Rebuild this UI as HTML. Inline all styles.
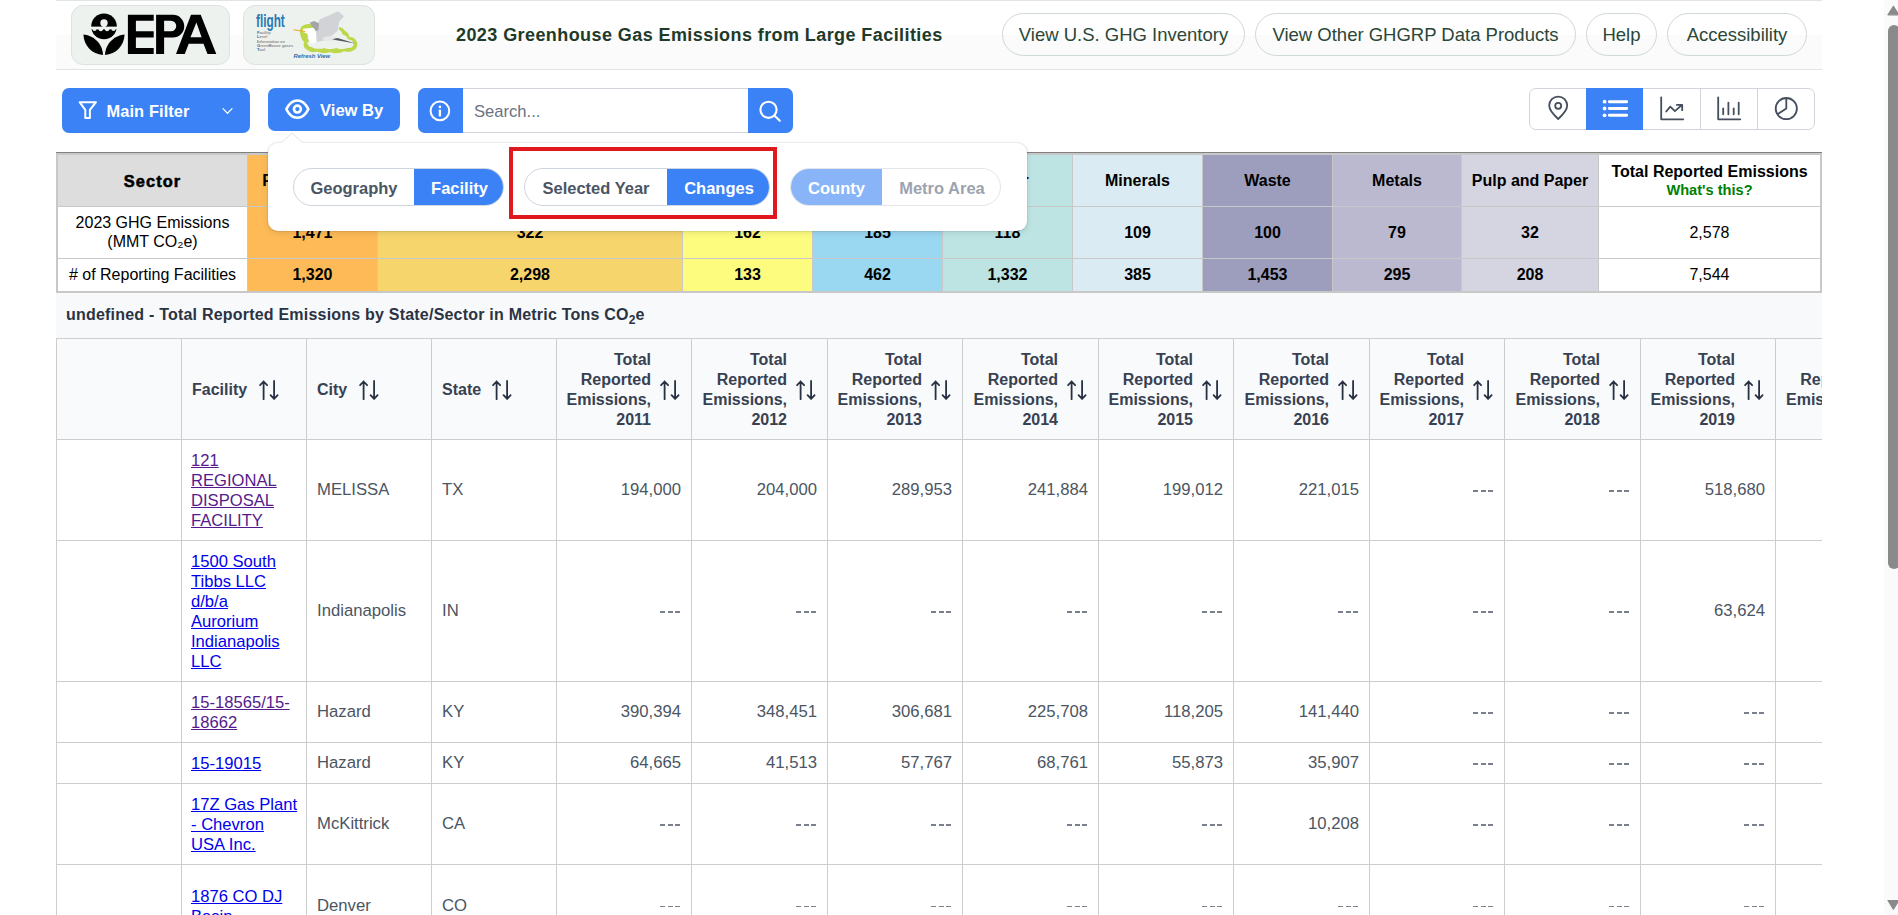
<!DOCTYPE html><html><head><meta charset="utf-8"><title>FLIGHT</title><style>
*{box-sizing:border-box;margin:0;padding:0}
html,body{width:1898px;height:915px;overflow:hidden;background:#fff;font-family:"Liberation Sans",sans-serif}
.a{position:absolute}
#hdr{position:absolute;left:56px;top:0;width:1766px;height:70px;border-top:1px solid #dfe5e2;border-bottom:1px solid #dfe5e2;background:linear-gradient(#fff 0,#fff 50%,#fbfbfb 50%,#fbfbfb 100%)}
.logo{position:absolute;top:5px;height:60px;background:#edf2ef;border:1px solid #dbe4df;border-radius:12px;overflow:hidden}
.pill{position:absolute;top:13px;height:43px;border:1px solid #cfd9d3;border-radius:22px;color:#2b4737;font-size:18.5px;line-height:41px;text-align:center;white-space:nowrap}
#title{position:absolute;left:456px;top:25px;font-size:18px;line-height:20px;font-weight:bold;color:#1e3a29;white-space:nowrap;letter-spacing:0.42px}
.btn{position:absolute;background:#3b82f6;color:#fff;border-radius:7px;font-weight:bold;font-size:17px;white-space:nowrap}
.btn span{position:absolute;line-height:20px}
svg{position:absolute;overflow:visible}
/* sector table */
#sec{position:absolute;left:56px;top:152px;width:1766px;height:141px;border:2px solid #c8c8c8;border-top:1px solid #808080;background:#c8c8c8}
.sc{position:absolute;display:flex;flex-direction:column;align-items:center;justify-content:center;text-align:center;color:#000;font-size:16px;line-height:19px}
.b{font-weight:bold}
/* popover */
#pop{position:absolute;left:268px;top:143px;width:759px;height:88px;background:#fff;border-radius:10px;box-shadow:0 0 0 1px rgba(0,0,0,0.06),0 2px 6px rgba(0,0,0,0.10)}
.tg{position:absolute;top:168px;height:38px;border:1px solid #cfd5dd;border-radius:19px;overflow:hidden;font-size:16.5px;white-space:nowrap}
.tg div{position:absolute;top:0;height:36px;line-height:39px;text-align:center;font-weight:bold}
/* data */
#ttl{position:absolute;left:56px;top:293px;width:1766px;height:46px;background:#f8f9fb}
#ttl span{position:absolute;left:10px;top:12px;letter-spacing:0.21px;font-size:16px;font-weight:bold;color:#2a3342;white-space:nowrap;line-height:20px}
#dt{position:absolute;left:56px;top:338px;width:1766px;height:577px;overflow:hidden}
.vl{position:absolute;top:0;width:1px;height:577px;background:#cdcdcd}
.hl{position:absolute;left:0;width:1766px;height:1px;background:#cdcdcd}
.th{position:absolute;font-weight:bold;color:#374151;font-size:16px;line-height:20px;white-space:nowrap}
.td{position:absolute;color:#4b5563;font-size:16.7px;line-height:20px;white-space:nowrap}
.lk{position:absolute;font-size:16.6px;line-height:20px;white-space:nowrap;text-decoration:underline;color:#0000ee}
.vis{color:#551a8b}
</style></head><body>
<div id="hdr"></div>
<div class="logo" style="left:71px;width:159px"></div>
<div class="logo" style="left:243px;width:132px"></div>
<div id="title">2023 Greenhouse Gas Emissions from Large Facilities</div>
<div class="pill" style="left:1002px;width:243px">View U.S. GHG Inventory</div>
<div class="pill" style="left:1255px;width:321px">View Other GHGRP Data Products</div>
<div class="pill" style="left:1586px;width:71px">Help</div>
<div class="pill" style="left:1667px;width:140px">Accessibility</div>
<div class="btn" style="left:62px;top:88px;width:188px;height:44.5px"><span style="left:44.5px;top:13px;font-size:16.4px;letter-spacing:0.1px">Main Filter</span></div>
<div class="btn" style="left:268px;top:88px;width:132px;height:43px"><span style="left:52px;top:12.5px;font-size:16.6px">View By</span></div>
<div class="a" style="left:418px;top:88px;width:375px;height:44.5px;border-radius:7px;background:#fff;border:1px solid #ced4da"></div>
<div class="a" style="left:418px;top:88px;width:45px;height:44.5px;border-radius:7px 0 0 7px;background:#3b82f6"></div>
<div class="a" style="left:748px;top:88px;width:45px;height:44.5px;border-radius:0 7px 7px 0;background:#3b82f6"></div>
<div class="a" style="left:474px;top:101.5px;font-size:16.6px;line-height:20px;color:#6b7280">Search...</div>
<div class="a" style="left:1529px;top:88px;width:286px;height:41.5px;border:1px solid #d1d5db;border-radius:7px;background:#fff;overflow:hidden"></div>
<div class="a" style="left:1586px;top:88px;width:57px;height:41.5px;background:#3b82f6"></div>
<div class="a" style="left:1700px;top:89px;width:1px;height:40px;background:#d1d5db"></div>
<div class="a" style="left:1757px;top:89px;width:1px;height:40px;background:#d1d5db"></div>
<svg style="left:74px;top:96px" width="30" height="28" viewBox="74 96 30 28"><path d="M79.6 102.2 H96 L89.9 109.8 V118 H85.3 V109.8 Z" fill="none" stroke="#fff" stroke-width="2" stroke-linejoin="round"/></svg>
<svg style="left:218px;top:102px" width="20" height="16" viewBox="218 102 20 16"><path d="M223 108.6 L227.5 113.4 L232 108.6" fill="none" stroke="#fff" stroke-width="1.3" stroke-linecap="round" stroke-linejoin="round"/></svg>
<svg style="left:280px;top:95px" width="35" height="28" viewBox="280 95 35 28"><path d="M286.3 109.1 C289.2 103.3 293 100.4 297.35 100.4 C301.7 100.4 305.5 103.3 308.4 109.1 C305.5 114.9 301.7 117.8 297.35 117.8 C293 117.8 289.2 114.9 286.3 109.1 Z" fill="none" stroke="#fff" stroke-width="2.5" stroke-linejoin="round"/><circle cx="297.4" cy="109.1" r="3.45" fill="none" stroke="#fff" stroke-width="2.6"/></svg>
<svg style="left:426px;top:97px" width="28" height="28" viewBox="426 97 28 28"><circle cx="439.9" cy="110.9" r="9.3" fill="none" stroke="#fff" stroke-width="2"/><rect x="438.75" y="105.7" width="2.3" height="2.3" fill="#fff"/><rect x="438.75" y="109.6" width="2.3" height="6.8" rx="0.6" fill="#fff"/></svg>
<svg style="left:755px;top:97px" width="32" height="30" viewBox="755 97 32 30"><circle cx="768.5" cy="109.8" r="8.1" fill="none" stroke="#fff" stroke-width="2.1"/><path d="M774.3 115.6 L779.8 120.8" stroke="#fff" stroke-width="2.1" stroke-linecap="round"/></svg>
<svg style="left:1540px;top:90px" width="260" height="38" viewBox="1540 90 260 38"><path d="M1558.2 119 C1551 112.5 1549.2 108.5 1549.2 105.6 A9 9 0 0 1 1567.2 105.6 C1567.2 108.5 1565.4 112.5 1558.2 119 Z" fill="none" stroke="#454e5c" stroke-width="1.8" stroke-linejoin="round"/><circle cx="1558.2" cy="105.8" r="3" fill="none" stroke="#454e5c" stroke-width="1.8"/><g fill="#fff"><circle cx="1604.6" cy="101.7" r="1.9"/><circle cx="1604.6" cy="108.5" r="1.9"/><circle cx="1604.6" cy="115.3" r="1.9"/></g><path d="M1609.3 101.7 H1626.7 M1609.3 108.5 H1626.7 M1609.3 115.3 H1626.7" stroke="#fff" stroke-width="2.9" stroke-linecap="round"/><path d="M1661.2 97.3 V119.3 H1683.3 M1666.2 111.5 L1670.3 106.7 L1674.9 111.2 L1682 104.9 M1676.9 104.9 H1682.2 V110.2" fill="none" stroke="#454e5c" stroke-width="1.8" stroke-linecap="round" stroke-linejoin="round"/><path d="M1718.2 97.3 V119.3 H1740.3 M1723.2 108.4 V114.3 M1728.4 102.6 V114.3 M1733.7 108.4 V114.3 M1738.7 102.6 V114.3" fill="none" stroke="#454e5c" stroke-width="1.8" stroke-linecap="round" stroke-linejoin="round"/><circle cx="1786.3" cy="108.6" r="10.6" fill="none" stroke="#454e5c" stroke-width="1.8"/><path d="M1786.3 98 V108.6 L1777.2 114.4" fill="none" stroke="#454e5c" stroke-width="1.8" stroke-linejoin="round"/></svg>
<svg style="left:71px;top:5px" width="159" height="60" viewBox="71 5 159 60"><g fill="#000"><path d="M127.9 14.8 H153.7 V20.8 H135.9 V31.3 H153.7 V37.5 H135.9 V48 H153.7 V53.9 H127.9 Z"/><path fill-rule="evenodd" d="M156.1 14.8 H172.9 A11.35 11.35 0 0 1 172.9 37.5 H164.1 V53.9 H156.1 Z M164.1 20.8 V31.3 H171 A5.25 5.25 0 0 0 171 20.8 Z"/><path fill-rule="evenodd" d="M176 53.9 L191 14.8 H200.7 L216.3 53.9 H207.5 L203.5 43.8 H188.7 L184.8 53.9 Z M196.4 22.5 L190.5 37.3 H201.6 Z"/><circle cx="104" cy="26.4" r="12.8"/><g fill="#edf2ef"><rect x="90" y="26.6" width="28" height="2.8"/><circle cx="94.5" cy="29.1" r="2"/><circle cx="100.8" cy="29.2" r="2.1"/><circle cx="107.1" cy="29.2" r="2.1"/><circle cx="113.5" cy="29.1" r="2"/><circle cx="104" cy="23" r="3.7"/><rect x="102.6" y="23" width="2.8" height="4.5"/></g><path d="M83.4 34.4 C92 35 102.5 42 103 54.9 C92 54 84 46 83.4 34.4 Z"/><path d="M124.6 34.4 C116 35 105.5 42 105 54.9 C116 54 124 46 124.6 34.4 Z"/></g></svg>
<svg style="left:243px;top:5px" width="132" height="60" viewBox="243 5 132 60"><g transform="translate(243 5)"><text x="13" y="21.9" font-family="Liberation Sans" font-weight="bold" font-size="18" fill="#2b78b4" transform="translate(13 0) scale(0.655 1) translate(-13 0)">flight</text><g font-family="Liberation Sans" font-size="4" fill="#8c8c8c" font-weight="bold"><text x="14" y="29.3"><tspan fill="#2b6ea8">F</tspan>acility</text><text x="14" y="33.4"><tspan fill="#2b6ea8">L</tspan>evel</text><text x="14" y="37.6"><tspan fill="#2b6ea8">I</tspan>nformation on</text><text x="14" y="41.8"><tspan fill="#2b6ea8">G</tspan>reen<tspan fill="#2b6ea8">H</tspan>ouse gases</text><text x="14" y="46"><tspan fill="#2b6ea8">T</tspan>ool</text></g><path d="M57 28 C56 21 62 18.5 66.5 19 C69 19.3 71 20.5 71.5 22 L66 27 C64 30 64.5 35 66.5 37 L62 38 C58.5 35 57.5 31.5 57 28 Z" fill="#bcd84a"/><path d="M61 37 C60 41 61.5 44 64 44.5 C66 47 71 48 74 46.5 C78 48.5 84 48.5 87 47 C91 49 98 48.5 101 46 C104 47.5 109 47 112 44.5 C115 42 115 37.5 113 35.5 C112 33.5 109 31.5 106.5 32 C106 29 104.5 27 102 26 C101 24 99 22.5 96.5 22 L95.8 24.5 C98 25.5 99 27.5 99.5 29.5 C102.5 30 104.5 32 105 34.5 C108 34.5 110.5 36 110.5 39 C110.5 42 108 43.5 104.5 43 C100.5 44.5 96 44.5 93 43 C90 44.5 84 44.5 81 43 C77.5 44.5 71 44 68.5 42 C66.5 42 64.5 40.5 64.5 38 Z" fill="#bcd84a"/><path d="M76.5 14.5 L95.1 6.3 L101.1 11.2 L96.2 16.7 L94.5 26 L83 35 L74.3 36.9 L72.5 30 Z" fill="#d2d3d6"/><path d="M66.7 17.8 L71 16.1 L76 18.3 L75.4 24.9 L72.7 26.5 L67.8 19.4 Z" fill="#a3a4a8"/><path d="M60.1 23.8 L70.5 22.7 C72.5 25 73.2 27 73.2 29.2 L73.2 35.8 C72.5 37.5 71.5 38.5 70 38.5 L66.7 38 C66 36 66.3 34.5 66.1 33.6 C65.5 31 65 30 64 28.7 C62.5 27.8 61 27.5 60.1 27 Z" fill="#ffffff"/><ellipse cx="87" cy="33.6" rx="7.5" ry="2.3" fill="#e6e7e8"/><path d="M50.3 24.2 L62.3 26.1 L62.1 27 L50.5 25.2 Z" fill="#f0a030"/><path d="M89.1 34.2 L94.5 33 L112.6 38.5 L95 35.6 Z" fill="#55595e"/><text x="50.4" y="53.4" font-family="Liberation Sans" font-size="5.9" font-style="italic" font-weight="bold" fill="#2b6ea8">Refresh View</text></g></svg>
<div class="a" style="left:56px;top:152px;width:1766px;height:141px;background:#c8c8c8"></div>
<div class="a" style="left:56px;top:152px;width:1766px;height:1px;background:#808080"></div>
<div class="sc b" style="left:58px;top:155px;width:189px;height:51px;background:#dddddd;"><span style="font-size:16.4px;letter-spacing:1.1px;-webkit-text-stroke:0.55px #000;position:relative;top:0.5px">Sector</span></div>
<div class="sc" style="left:58px;top:207px;width:189px;height:51px;background:#ffffff;padding-bottom:2px;">2023 GHG Emissions<br>(MMT CO₂e)</div>
<div class="sc" style="left:58px;top:259px;width:189px;height:32px;background:#ffffff;padding-bottom:2px;"># of Reporting Facilities</div>
<div class="sc b" style="left:248px;top:155px;width:129px;height:51px;background:#fdba57;">Power Plants</div>
<div class="sc b" style="left:248px;top:207px;width:129px;height:51px;background:#fdba57;">1,471</div>
<div class="sc b" style="left:248px;top:259px;width:129px;height:32px;background:#fdba57;padding-bottom:2px;">1,320</div>
<div class="sc b" style="left:378px;top:155px;width:304px;height:51px;background:#f6d56d;">Petroleum and Natural Gas Systems</div>
<div class="sc b" style="left:378px;top:207px;width:304px;height:51px;background:#f6d56d;">322</div>
<div class="sc b" style="left:378px;top:259px;width:304px;height:32px;background:#f6d56d;padding-bottom:2px;">2,298</div>
<div class="sc b" style="left:683px;top:155px;width:129px;height:51px;background:#fdfc7f;">Refineries</div>
<div class="sc b" style="left:683px;top:207px;width:129px;height:51px;background:#fdfc7f;">162</div>
<div class="sc b" style="left:683px;top:259px;width:129px;height:32px;background:#fdfc7f;padding-bottom:2px;">133</div>
<div class="sc b" style="left:813px;top:155px;width:129px;height:51px;background:#9ad7f1;">Chemicals</div>
<div class="sc b" style="left:813px;top:207px;width:129px;height:51px;background:#9ad7f1;">185</div>
<div class="sc b" style="left:813px;top:259px;width:129px;height:32px;background:#9ad7f1;padding-bottom:2px;">462</div>
<div class="sc b" style="left:943px;top:155px;width:129px;height:51px;background:#bde4e2;">Other</div>
<div class="sc b" style="left:943px;top:207px;width:129px;height:51px;background:#bde4e2;">118</div>
<div class="sc b" style="left:943px;top:259px;width:129px;height:32px;background:#bde4e2;padding-bottom:2px;">1,332</div>
<div class="sc b" style="left:1073px;top:155px;width:129px;height:51px;background:#dbebf3;">Minerals</div>
<div class="sc b" style="left:1073px;top:207px;width:129px;height:51px;background:#dbebf3;">109</div>
<div class="sc b" style="left:1073px;top:259px;width:129px;height:32px;background:#dbebf3;padding-bottom:2px;">385</div>
<div class="sc b" style="left:1203px;top:155px;width:129px;height:51px;background:#9d9ebd;">Waste</div>
<div class="sc b" style="left:1203px;top:207px;width:129px;height:51px;background:#9d9ebd;">100</div>
<div class="sc b" style="left:1203px;top:259px;width:129px;height:32px;background:#9d9ebd;padding-bottom:2px;">1,453</div>
<div class="sc b" style="left:1333px;top:155px;width:128px;height:51px;background:#bab9d0;">Metals</div>
<div class="sc b" style="left:1333px;top:207px;width:128px;height:51px;background:#bab9d0;">79</div>
<div class="sc b" style="left:1333px;top:259px;width:128px;height:32px;background:#bab9d0;padding-bottom:2px;">295</div>
<div class="sc b" style="left:1462px;top:155px;width:136px;height:51px;background:#d5d5e2;">Pulp and Paper</div>
<div class="sc b" style="left:1462px;top:207px;width:136px;height:51px;background:#d5d5e2;">32</div>
<div class="sc b" style="left:1462px;top:259px;width:136px;height:32px;background:#d5d5e2;padding-bottom:2px;">208</div>
<div class="sc b" style="left:1599px;top:155px;width:221px;height:51px;background:#ffffff;">Total Reported Emissions<br><span style="color:#008000;font-size:14.6px;line-height:18px">What's this?</span></div>
<div class="sc" style="left:1599px;top:207px;width:221px;height:51px;background:#ffffff;">2,578</div>
<div class="sc" style="left:1599px;top:259px;width:221px;height:32px;background:#ffffff;padding-bottom:2px;">7,544</div>
<div id="pop"></div>
<svg style="left:280px;top:132px" width="26" height="13"><path d="M0 12 L12 1 L24 12" fill="#fff" stroke="#e3e3e3" stroke-width="1"/><rect x="0" y="11" width="26" height="3" fill="#fff"/></svg>
<div class="tg" style="left:293px;width:211px"><div style="left:0;width:120px;color:#4b5563">Geography</div><div style="left:120px;width:91px;background:#3b82f6;color:#fff">Facility</div></div>
<div class="tg" style="left:524px;width:246px"><div style="left:0;width:142px;color:#4b5563">Selected Year</div><div style="left:142px;width:104px;background:#3b82f6;color:#fff">Changes</div></div>
<div class="tg" style="left:790px;width:211px;border-color:#e3e6ea"><div style="left:0;width:91px;background:#8ab4f8;color:#fff">County</div><div style="left:91px;width:120px;color:#9ca3af">Metro Area</div></div>
<div class="a" style="left:509px;top:147px;width:268px;height:72px;border:4px solid #e0191f"></div>
<div id="ttl"><span>undefined - Total Reported Emissions by State/Sector in Metric Tons CO<sub style="font-size:12px">2</sub>e</span></div>
<div id="dt">
<div class="a" style="left:0;top:0;width:1766px;height:101px;background:#f9fafb"></div>
<div class="vl" style="left:0px"></div>
<div class="vl" style="left:125px"></div>
<div class="vl" style="left:250px"></div>
<div class="vl" style="left:375px"></div>
<div class="vl" style="left:500px"></div>
<div class="vl" style="left:635px"></div>
<div class="vl" style="left:771px"></div>
<div class="vl" style="left:906px"></div>
<div class="vl" style="left:1042px"></div>
<div class="vl" style="left:1177px"></div>
<div class="vl" style="left:1313px"></div>
<div class="vl" style="left:1448px"></div>
<div class="vl" style="left:1584px"></div>
<div class="vl" style="left:1719px"></div>
<div class="hl" style="top:0px"></div>
<div class="hl" style="top:101px"></div>
<div class="hl" style="top:202px"></div>
<div class="hl" style="top:343px"></div>
<div class="hl" style="top:404px"></div>
<div class="hl" style="top:445px"></div>
<div class="hl" style="top:526px"></div>
<div class="th" style="left:136px;top:42px">Facility</div>
<svg style="left:203px;top:42px" width="20" height="21" viewBox="0 0 20 21"><path d="M4.6 19.2 V1.5 M1.1 5.2 L4.6 1.5 L8.1 5.2 M15.1 1 V18.9 M11.6 15.2 L15.1 18.9 L18.6 15.2" fill="none" stroke="#273142" stroke-width="1.8" stroke-linecap="round" stroke-linejoin="round"/></svg>
<div class="th" style="left:261px;top:42px">City</div>
<svg style="left:303px;top:42px" width="20" height="21" viewBox="0 0 20 21"><path d="M4.6 19.2 V1.5 M1.1 5.2 L4.6 1.5 L8.1 5.2 M15.1 1 V18.9 M11.6 15.2 L15.1 18.9 L18.6 15.2" fill="none" stroke="#273142" stroke-width="1.8" stroke-linecap="round" stroke-linejoin="round"/></svg>
<div class="th" style="left:386px;top:42px">State</div>
<svg style="left:436px;top:42px" width="20" height="21" viewBox="0 0 20 21"><path d="M4.6 19.2 V1.5 M1.1 5.2 L4.6 1.5 L8.1 5.2 M15.1 1 V18.9 M11.6 15.2 L15.1 18.9 L18.6 15.2" fill="none" stroke="#273142" stroke-width="1.8" stroke-linecap="round" stroke-linejoin="round"/></svg>
<div class="th" style="right:1171px;top:12px;text-align:right">Total<br>Reported<br>Emissions,<br>2011</div>
<svg style="left:604px;top:42px" width="20" height="21" viewBox="0 0 20 21"><path d="M4.6 19.2 V1.5 M1.1 5.2 L4.6 1.5 L8.1 5.2 M15.1 1 V18.9 M11.6 15.2 L15.1 18.9 L18.6 15.2" fill="none" stroke="#273142" stroke-width="1.8" stroke-linecap="round" stroke-linejoin="round"/></svg>
<div class="th" style="right:1035px;top:12px;text-align:right">Total<br>Reported<br>Emissions,<br>2012</div>
<svg style="left:740px;top:42px" width="20" height="21" viewBox="0 0 20 21"><path d="M4.6 19.2 V1.5 M1.1 5.2 L4.6 1.5 L8.1 5.2 M15.1 1 V18.9 M11.6 15.2 L15.1 18.9 L18.6 15.2" fill="none" stroke="#273142" stroke-width="1.8" stroke-linecap="round" stroke-linejoin="round"/></svg>
<div class="th" style="right:900px;top:12px;text-align:right">Total<br>Reported<br>Emissions,<br>2013</div>
<svg style="left:875px;top:42px" width="20" height="21" viewBox="0 0 20 21"><path d="M4.6 19.2 V1.5 M1.1 5.2 L4.6 1.5 L8.1 5.2 M15.1 1 V18.9 M11.6 15.2 L15.1 18.9 L18.6 15.2" fill="none" stroke="#273142" stroke-width="1.8" stroke-linecap="round" stroke-linejoin="round"/></svg>
<div class="th" style="right:764px;top:12px;text-align:right">Total<br>Reported<br>Emissions,<br>2014</div>
<svg style="left:1011px;top:42px" width="20" height="21" viewBox="0 0 20 21"><path d="M4.6 19.2 V1.5 M1.1 5.2 L4.6 1.5 L8.1 5.2 M15.1 1 V18.9 M11.6 15.2 L15.1 18.9 L18.6 15.2" fill="none" stroke="#273142" stroke-width="1.8" stroke-linecap="round" stroke-linejoin="round"/></svg>
<div class="th" style="right:629px;top:12px;text-align:right">Total<br>Reported<br>Emissions,<br>2015</div>
<svg style="left:1146px;top:42px" width="20" height="21" viewBox="0 0 20 21"><path d="M4.6 19.2 V1.5 M1.1 5.2 L4.6 1.5 L8.1 5.2 M15.1 1 V18.9 M11.6 15.2 L15.1 18.9 L18.6 15.2" fill="none" stroke="#273142" stroke-width="1.8" stroke-linecap="round" stroke-linejoin="round"/></svg>
<div class="th" style="right:493px;top:12px;text-align:right">Total<br>Reported<br>Emissions,<br>2016</div>
<svg style="left:1282px;top:42px" width="20" height="21" viewBox="0 0 20 21"><path d="M4.6 19.2 V1.5 M1.1 5.2 L4.6 1.5 L8.1 5.2 M15.1 1 V18.9 M11.6 15.2 L15.1 18.9 L18.6 15.2" fill="none" stroke="#273142" stroke-width="1.8" stroke-linecap="round" stroke-linejoin="round"/></svg>
<div class="th" style="right:358px;top:12px;text-align:right">Total<br>Reported<br>Emissions,<br>2017</div>
<svg style="left:1417px;top:42px" width="20" height="21" viewBox="0 0 20 21"><path d="M4.6 19.2 V1.5 M1.1 5.2 L4.6 1.5 L8.1 5.2 M15.1 1 V18.9 M11.6 15.2 L15.1 18.9 L18.6 15.2" fill="none" stroke="#273142" stroke-width="1.8" stroke-linecap="round" stroke-linejoin="round"/></svg>
<div class="th" style="right:222px;top:12px;text-align:right">Total<br>Reported<br>Emissions,<br>2018</div>
<svg style="left:1553px;top:42px" width="20" height="21" viewBox="0 0 20 21"><path d="M4.6 19.2 V1.5 M1.1 5.2 L4.6 1.5 L8.1 5.2 M15.1 1 V18.9 M11.6 15.2 L15.1 18.9 L18.6 15.2" fill="none" stroke="#273142" stroke-width="1.8" stroke-linecap="round" stroke-linejoin="round"/></svg>
<div class="th" style="right:87px;top:12px;text-align:right">Total<br>Reported<br>Emissions,<br>2019</div>
<svg style="left:1688px;top:42px" width="20" height="21" viewBox="0 0 20 21"><path d="M4.6 19.2 V1.5 M1.1 5.2 L4.6 1.5 L8.1 5.2 M15.1 1 V18.9 M11.6 15.2 L15.1 18.9 L18.6 15.2" fill="none" stroke="#273142" stroke-width="1.8" stroke-linecap="round" stroke-linejoin="round"/></svg>
<div class="th" style="right:-48.5px;top:12px;text-align:right">Total<br>Reported<br>Emissions,<br>2020</div>
<svg style="left:1823.5px;top:42px" width="20" height="21" viewBox="0 0 20 21"><path d="M4.6 19.2 V1.5 M1.1 5.2 L4.6 1.5 L8.1 5.2 M15.1 1 V18.9 M11.6 15.2 L15.1 18.9 L18.6 15.2" fill="none" stroke="#273142" stroke-width="1.8" stroke-linecap="round" stroke-linejoin="round"/></svg>
<div class="lk vis" style="left:135px;top:113.0px">121<br>REGIONAL<br>DISPOSAL<br>FACILITY</div>
<div class="td" style="left:261px;top:142.1px">MELISSA</div>
<div class="td" style="left:386px;top:142.1px">TX</div>
<div class="td" style="right:1141px;top:142.1px">194,000</div>
<div class="td" style="right:1005px;top:142.1px">204,000</div>
<div class="td" style="right:870px;top:142.1px">289,953</div>
<div class="td" style="right:734px;top:142.1px">241,884</div>
<div class="td" style="right:599px;top:142.1px">199,012</div>
<div class="td" style="right:463px;top:142.1px">221,015</div>
<div class="a" style="left:1416.8px;top:152.0px;width:20.2px;height:1.8px;background:repeating-linear-gradient(90deg,#7a818d 0,#7a818d 5px,transparent 5px,transparent 7.6px)"></div>
<div class="a" style="left:1552.8px;top:152.0px;width:20.2px;height:1.8px;background:repeating-linear-gradient(90deg,#7a818d 0,#7a818d 5px,transparent 5px,transparent 7.6px)"></div>
<div class="td" style="right:57px;top:142.1px">518,680</div>
<div class="lk" style="left:135px;top:214.0px">1500 South<br>Tibbs LLC<br>d/b/a<br>Aurorium<br>Indianapolis<br>LLC</div>
<div class="td" style="left:261px;top:263.1px">Indianapolis</div>
<div class="td" style="left:386px;top:263.1px">IN</div>
<div class="a" style="left:603.8px;top:273.0px;width:20.2px;height:1.8px;background:repeating-linear-gradient(90deg,#7a818d 0,#7a818d 5px,transparent 5px,transparent 7.6px)"></div>
<div class="a" style="left:739.8px;top:273.0px;width:20.2px;height:1.8px;background:repeating-linear-gradient(90deg,#7a818d 0,#7a818d 5px,transparent 5px,transparent 7.6px)"></div>
<div class="a" style="left:874.8px;top:273.0px;width:20.2px;height:1.8px;background:repeating-linear-gradient(90deg,#7a818d 0,#7a818d 5px,transparent 5px,transparent 7.6px)"></div>
<div class="a" style="left:1010.8px;top:273.0px;width:20.2px;height:1.8px;background:repeating-linear-gradient(90deg,#7a818d 0,#7a818d 5px,transparent 5px,transparent 7.6px)"></div>
<div class="a" style="left:1145.8px;top:273.0px;width:20.2px;height:1.8px;background:repeating-linear-gradient(90deg,#7a818d 0,#7a818d 5px,transparent 5px,transparent 7.6px)"></div>
<div class="a" style="left:1281.8px;top:273.0px;width:20.2px;height:1.8px;background:repeating-linear-gradient(90deg,#7a818d 0,#7a818d 5px,transparent 5px,transparent 7.6px)"></div>
<div class="a" style="left:1416.8px;top:273.0px;width:20.2px;height:1.8px;background:repeating-linear-gradient(90deg,#7a818d 0,#7a818d 5px,transparent 5px,transparent 7.6px)"></div>
<div class="a" style="left:1552.8px;top:273.0px;width:20.2px;height:1.8px;background:repeating-linear-gradient(90deg,#7a818d 0,#7a818d 5px,transparent 5px,transparent 7.6px)"></div>
<div class="td" style="right:57px;top:263.1px">63,624</div>
<div class="lk vis" style="left:135px;top:355.0px">15-18565/15-<br>18662</div>
<div class="td" style="left:261px;top:364.1px">Hazard</div>
<div class="td" style="left:386px;top:364.1px">KY</div>
<div class="td" style="right:1141px;top:364.1px">390,394</div>
<div class="td" style="right:1005px;top:364.1px">348,451</div>
<div class="td" style="right:870px;top:364.1px">306,681</div>
<div class="td" style="right:734px;top:364.1px">225,708</div>
<div class="td" style="right:599px;top:364.1px">118,205</div>
<div class="td" style="right:463px;top:364.1px">141,440</div>
<div class="a" style="left:1416.8px;top:374.0px;width:20.2px;height:1.8px;background:repeating-linear-gradient(90deg,#7a818d 0,#7a818d 5px,transparent 5px,transparent 7.6px)"></div>
<div class="a" style="left:1552.8px;top:374.0px;width:20.2px;height:1.8px;background:repeating-linear-gradient(90deg,#7a818d 0,#7a818d 5px,transparent 5px,transparent 7.6px)"></div>
<div class="a" style="left:1687.8px;top:374.0px;width:20.2px;height:1.8px;background:repeating-linear-gradient(90deg,#7a818d 0,#7a818d 5px,transparent 5px,transparent 7.6px)"></div>
<div class="lk" style="left:135px;top:416.0px">15-19015</div>
<div class="td" style="left:261px;top:415.1px">Hazard</div>
<div class="td" style="left:386px;top:415.1px">KY</div>
<div class="td" style="right:1141px;top:415.1px">64,665</div>
<div class="td" style="right:1005px;top:415.1px">41,513</div>
<div class="td" style="right:870px;top:415.1px">57,767</div>
<div class="td" style="right:734px;top:415.1px">68,761</div>
<div class="td" style="right:599px;top:415.1px">55,873</div>
<div class="td" style="right:463px;top:415.1px">35,907</div>
<div class="a" style="left:1416.8px;top:425.0px;width:20.2px;height:1.8px;background:repeating-linear-gradient(90deg,#7a818d 0,#7a818d 5px,transparent 5px,transparent 7.6px)"></div>
<div class="a" style="left:1552.8px;top:425.0px;width:20.2px;height:1.8px;background:repeating-linear-gradient(90deg,#7a818d 0,#7a818d 5px,transparent 5px,transparent 7.6px)"></div>
<div class="a" style="left:1687.8px;top:425.0px;width:20.2px;height:1.8px;background:repeating-linear-gradient(90deg,#7a818d 0,#7a818d 5px,transparent 5px,transparent 7.6px)"></div>
<div class="lk" style="left:135px;top:457.0px">17Z Gas Plant<br>- Chevron<br>USA Inc.</div>
<div class="td" style="left:261px;top:476.1px">McKittrick</div>
<div class="td" style="left:386px;top:476.1px">CA</div>
<div class="a" style="left:603.8px;top:486.0px;width:20.2px;height:1.8px;background:repeating-linear-gradient(90deg,#7a818d 0,#7a818d 5px,transparent 5px,transparent 7.6px)"></div>
<div class="a" style="left:739.8px;top:486.0px;width:20.2px;height:1.8px;background:repeating-linear-gradient(90deg,#7a818d 0,#7a818d 5px,transparent 5px,transparent 7.6px)"></div>
<div class="a" style="left:874.8px;top:486.0px;width:20.2px;height:1.8px;background:repeating-linear-gradient(90deg,#7a818d 0,#7a818d 5px,transparent 5px,transparent 7.6px)"></div>
<div class="a" style="left:1010.8px;top:486.0px;width:20.2px;height:1.8px;background:repeating-linear-gradient(90deg,#7a818d 0,#7a818d 5px,transparent 5px,transparent 7.6px)"></div>
<div class="a" style="left:1145.8px;top:486.0px;width:20.2px;height:1.8px;background:repeating-linear-gradient(90deg,#7a818d 0,#7a818d 5px,transparent 5px,transparent 7.6px)"></div>
<div class="td" style="right:463px;top:476.1px">10,208</div>
<div class="a" style="left:1416.8px;top:486.0px;width:20.2px;height:1.8px;background:repeating-linear-gradient(90deg,#7a818d 0,#7a818d 5px,transparent 5px,transparent 7.6px)"></div>
<div class="a" style="left:1552.8px;top:486.0px;width:20.2px;height:1.8px;background:repeating-linear-gradient(90deg,#7a818d 0,#7a818d 5px,transparent 5px,transparent 7.6px)"></div>
<div class="a" style="left:1687.8px;top:486.0px;width:20.2px;height:1.8px;background:repeating-linear-gradient(90deg,#7a818d 0,#7a818d 5px,transparent 5px,transparent 7.6px)"></div>
<div class="lk" style="left:135px;top:548.5px">1876 CO DJ<br>Basin</div>
<div class="td" style="left:261px;top:557.6px">Denver</div>
<div class="td" style="left:386px;top:557.6px">CO</div>
<div class="a" style="left:603.8px;top:567.5px;width:20.2px;height:1.8px;background:repeating-linear-gradient(90deg,#7a818d 0,#7a818d 5px,transparent 5px,transparent 7.6px)"></div>
<div class="a" style="left:739.8px;top:567.5px;width:20.2px;height:1.8px;background:repeating-linear-gradient(90deg,#7a818d 0,#7a818d 5px,transparent 5px,transparent 7.6px)"></div>
<div class="a" style="left:874.8px;top:567.5px;width:20.2px;height:1.8px;background:repeating-linear-gradient(90deg,#7a818d 0,#7a818d 5px,transparent 5px,transparent 7.6px)"></div>
<div class="a" style="left:1010.8px;top:567.5px;width:20.2px;height:1.8px;background:repeating-linear-gradient(90deg,#7a818d 0,#7a818d 5px,transparent 5px,transparent 7.6px)"></div>
<div class="a" style="left:1145.8px;top:567.5px;width:20.2px;height:1.8px;background:repeating-linear-gradient(90deg,#7a818d 0,#7a818d 5px,transparent 5px,transparent 7.6px)"></div>
<div class="a" style="left:1281.8px;top:567.5px;width:20.2px;height:1.8px;background:repeating-linear-gradient(90deg,#7a818d 0,#7a818d 5px,transparent 5px,transparent 7.6px)"></div>
<div class="a" style="left:1416.8px;top:567.5px;width:20.2px;height:1.8px;background:repeating-linear-gradient(90deg,#7a818d 0,#7a818d 5px,transparent 5px,transparent 7.6px)"></div>
<div class="a" style="left:1552.8px;top:567.5px;width:20.2px;height:1.8px;background:repeating-linear-gradient(90deg,#7a818d 0,#7a818d 5px,transparent 5px,transparent 7.6px)"></div>
<div class="a" style="left:1687.8px;top:567.5px;width:20.2px;height:1.8px;background:repeating-linear-gradient(90deg,#7a818d 0,#7a818d 5px,transparent 5px,transparent 7.6px)"></div>
</div>
<div class="a" style="left:1884px;top:0;width:14px;height:915px;background:#fafafa"></div>
<div class="a" style="left:1888px;top:25px;width:12px;height:544px;background:#8a8a8a;border-radius:6px"></div>
<svg style="left:1884px;top:0px" width="14" height="915" viewBox="1884 0 14 915"><path d="M1893.4 6.3 L1888 14.8 H1898.8 Z M1893.4 909.3 L1888 900.5 H1898.8 Z" fill="#8a8a8a" stroke="#8a8a8a" stroke-width="1.2" stroke-linejoin="round"/></svg>
</body></html>
